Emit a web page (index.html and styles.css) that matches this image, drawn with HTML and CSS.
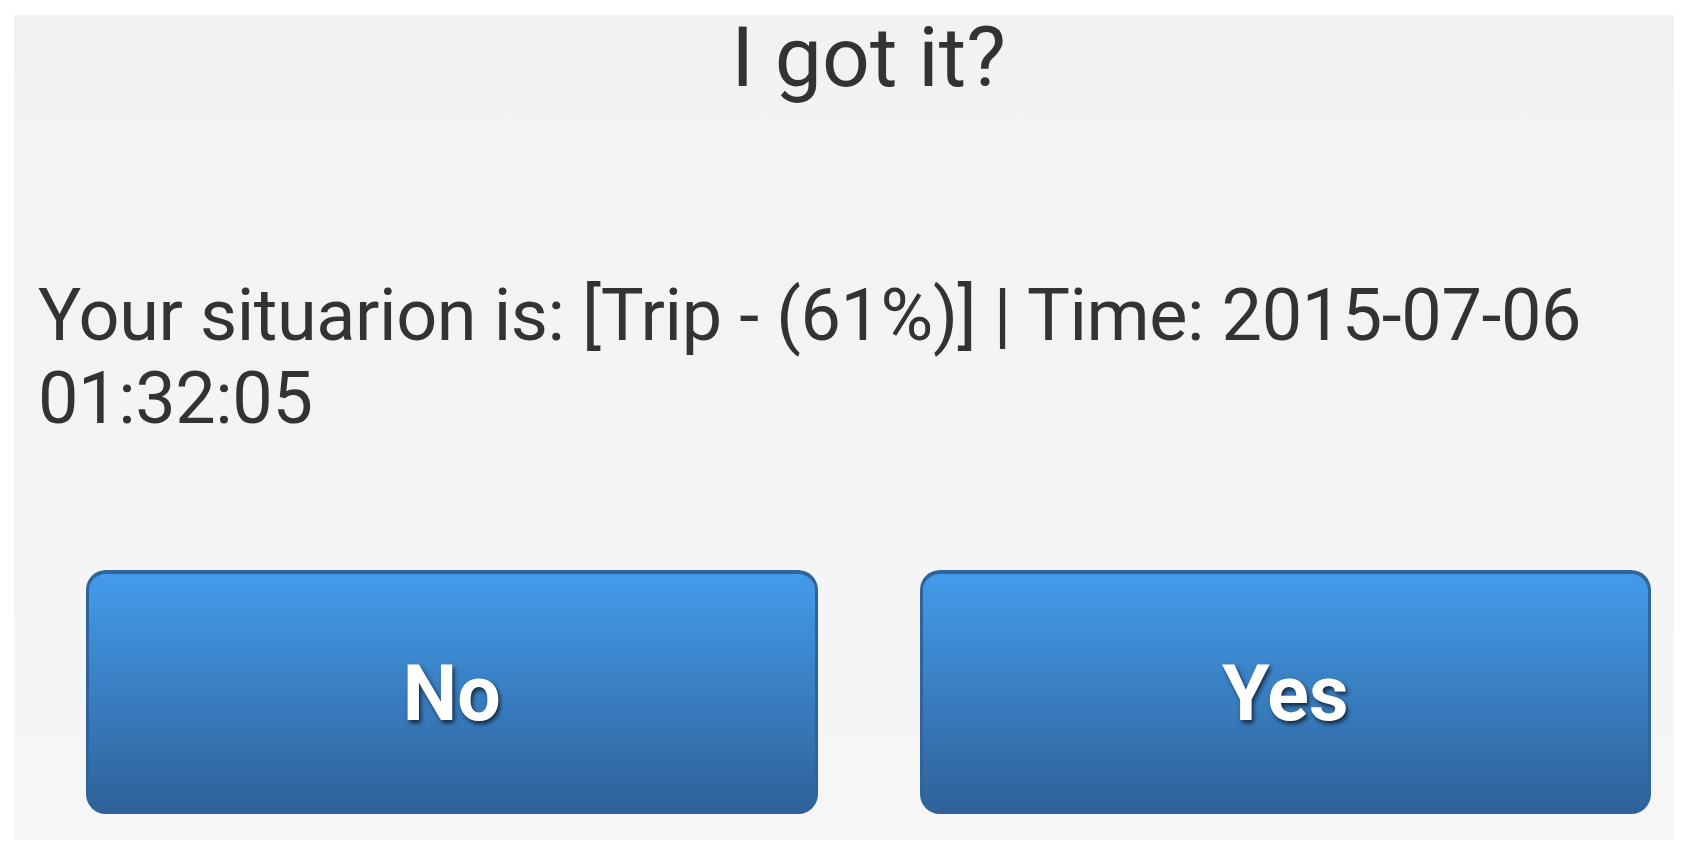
FILE: index.html
```html
<!DOCTYPE html>
<html lang="en">
<head>
<meta charset="utf-8">
<title>I got it?</title>
<link rel="stylesheet" href="styles.css">
</head>
<body>
<div class="panel">
  <div class="head">
    <h1 class="title">I got it?</h1>
  </div>
  <p class="message">Your situarion is: [Trip - (61%)] | Time: 2015-07-06 01:32:05</p>
  <div class="actions">
    <button class="btn" type="button">No</button>
    <button class="btn" type="button">Yes</button>
  </div>
</div>
</body>
</html>
```

FILE: styles.css
```css
html, body {
  margin: 0;
  padding: 0;
  background: #ffffff;
}
body {
  padding: 15px 15px 14px 14px;
  font-family: Roboto, "Liberation Sans", sans-serif;
}
.panel {
  height: 825px;
  box-sizing: border-box;
  background: linear-gradient(#f2f2f2, #f6f6f6);
  display: flex;
  flex-direction: column;
}
.head {
  padding: 1px 23px 0 72px;
}
.title {
  margin: 0;
  font-size: 84px;
  line-height: 84px;
  font-weight: 400;
  color: #333333;
  text-align: center;
}
.message {
  margin: 174px 0 0 0;
  padding: 0 23px 0 24px;
  font-size: 72px;
  line-height: 83px;
  letter-spacing: -0.4px;
  color: #333333;
}
.actions {
  margin-top: 130px;
  padding: 0 23px 0 72px;
  display: flex;
  gap: 102px;
}
.btn {
  flex: 1 1 0;
  height: 244px;
  box-sizing: border-box;
  border: 3px solid #30649c;
  border-top-width: 4px;
  border-bottom-width: 0;
  border-radius: 20px;
  background: linear-gradient(#439bea, #2f6198);
  color: #ffffff;
  font-family: Roboto, "Liberation Sans", sans-serif;
  font-weight: 700;
  font-size: 77px;
  text-shadow: 2px 3px 4px rgba(0, 0, 0, 0.65);
  padding: 0;
  cursor: pointer;
}
```
